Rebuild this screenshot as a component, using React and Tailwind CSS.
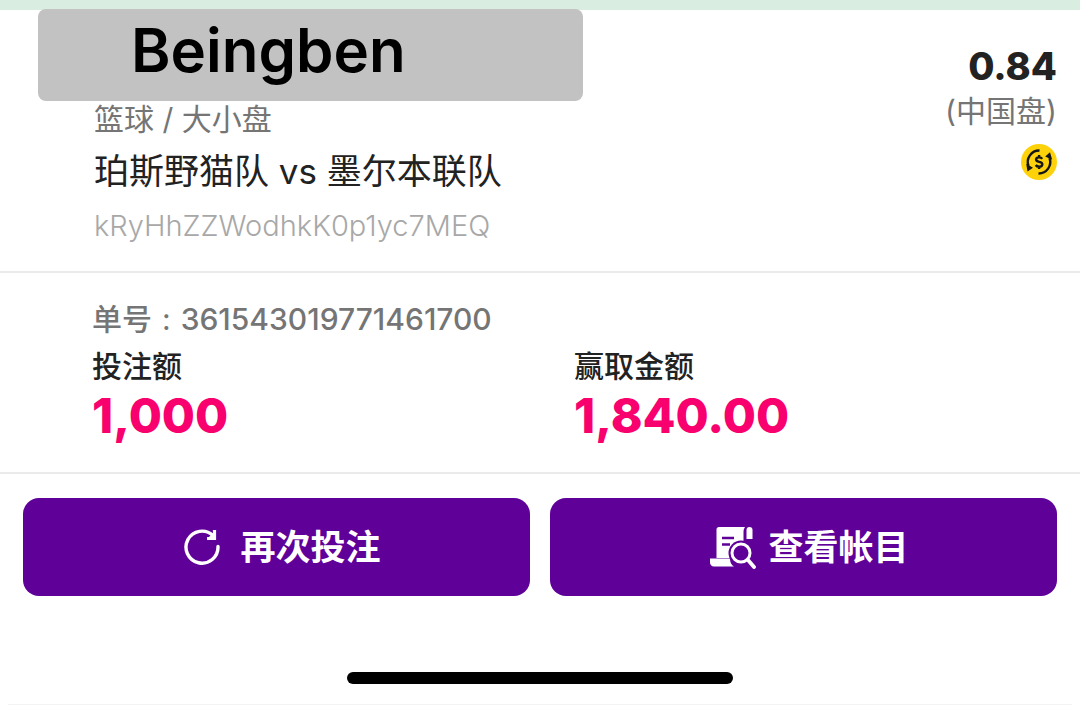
// ── Data ──────────────────────────────────────────────────────────────────────
const BET = {
  player: 'Beingben',
  market: '篮球 / 大小盘',
  match: '珀斯野猫队 vs 墨尔本联队',
  code: 'kRyHhZZWodhkK0p1yc7MEQ',
  odds: '0.84',
  oddsType: '(中国盘)',
  orderNo: '361543019771461700',
};

const AMOUNTS = [
  { label: '投注额', value: '1,000' },
  { label: '赢取金额', value: '1,840.00' },
];

// ── Icons ─────────────────────────────────────────────────────────────────────
function CashOutIcon() {
  return (
    <svg viewBox="0 0 36 36" className="size-9" role="img" aria-label="cash out">
      <circle cx="18" cy="18" r="18" fill="#fdd20a" />
      <g fill="none" stroke="#161616" strokeWidth="2.4">
        <path d="M18.5 6.5A11.5 11.5 0 0 0 7.5 22" />
        <path d="M17.5 29.5A11.5 11.5 0 0 0 28.5 14" />
        <path d="M21.2 14.9c-.6-1-1.7-1.5-3.1-1.5-1.8 0-3 .8-3 2.2 0 3.2 6.2 1.4 6.2 4.7 0 1.5-1.3 2.4-3.2 2.4-1.5 0-2.7-.6-3.4-1.7M18.1 11v2.4M18.1 22.4v2.6" />
      </g>
      <path d="M6.5 27.5L5.2 19.8l6.8 4z" fill="#161616" />
      <path d="M29 8.2l2.2 7.5-7-3.2z" fill="#161616" />
    </svg>
  );
}

function RepeatIcon() {
  return (
    <svg viewBox="0 0 36 36" className="size-9" fill="none" aria-hidden="true">
      <path
        d="M34 17.5A16 16 0 1 1 29 6.5"
        stroke="#fff"
        strokeWidth="3.4"
        strokeLinecap="round"
      />
      <path d="M30.5 1v8.5H23" stroke="#fff" strokeWidth="3.2" />
      <path d="M31 2v8h-8z" fill="#fff" />
    </svg>
  );
}

function StatementIcon() {
  return (
    <svg viewBox="0 0 46 44" className="h-11 w-[46px]" fill="none" aria-hidden="true">
      <path d="M9 2h26c-1 1.5-1.5 3-1.5 5v10h-8L20 33H6.5V4.5C6.5 3 7.5 2 9 2z" fill="#fff" />
      <path d="M36.5 14V5c0-2 1-3 3-3s3 1 3 3v9z" fill="#fff" />
      <path d="M0 33.5h20c0 4 1.5 6.5 4 8H4c-2.5 0-4-2-4-4z" fill="#fff" />
      <path d="M12 13h12M12 19.5h8" stroke="#5f0099" strokeWidth="2.4" />
      <circle cx="31" cy="28" r="12.5" fill="#5f0099" />
      <circle cx="31" cy="28" r="9" stroke="#fff" strokeWidth="3" />
      <path d="M38 35l6 7" stroke="#fff" strokeWidth="3.8" strokeLinecap="round" />
    </svg>
  );
}

// ── Sub-components ────────────────────────────────────────────────────────────
function ActionButton({ icon, gap, children }) {
  return (
    <button
      type="button"
      className={`flex h-[98px] flex-1 items-center justify-center rounded-2xl bg-[#5f0099] pl-3 text-[35px] leading-[48px] font-semibold text-white ${gap}`}
    >
      {icon}
      <span>{children}</span>
    </button>
  );
}

// ── Main page ─────────────────────────────────────────────────────────────────
export default function App() {
  return (
    <div className="bg-white font-[Inter,'Noto_Sans_CJK_SC',sans-serif] text-[#222]">
      <div className="h-2.5 bg-[#d9eee0]" />

      {/* Bet summary */}
      <section className="flex justify-between border-b-2 border-[#ebebeb] pr-[23px] pb-6">
        <div>
          <h1 className="-mt-px ml-[38px] h-[92px] w-[545px] rounded-lg bg-[#c2c2c2] pl-[93px] text-[60px] leading-[82px] font-semibold text-black">
            {BET.player}
          </h1>
          <div className="pl-[94px]">
            <p className="text-[30px] leading-9 text-[#757575]">{BET.market}</p>
            <p className="mt-2 text-[35px] leading-[52px]">{BET.match}</p>
            <p className="mt-2 text-[29px] leading-[42px] font-light text-[#a8a8a8]">{BET.code}</p>
          </div>
        </div>
        <div className="flex flex-col items-end pt-8">
          <p className="text-[38px] leading-[48px] font-extrabold">{BET.odds}</p>
          <p className="mb-3 text-[30px] leading-[42px] text-[#757575]">{BET.oddsType}</p>
          <CashOutIcon />
        </div>
      </section>

      {/* Order and amounts */}
      <section className="border-b-2 border-[#ebebeb] pt-6 pb-8 pl-[92px]">
        <p className="flex gap-2.5 text-[30px] leading-[44px] font-medium text-[#757575]">
          <span>单号</span>
          <span className="font-normal">:</span>
          <span>{BET.orderNo}</span>
        </p>
        <dl className="flex">
          {AMOUNTS.map(({ label, value }) => (
            <div key={label} className="w-[482px]">
              <dt className="text-[30px] leading-[50px] font-medium">{label}</dt>
              <dd className="text-[48px] leading-[49px] font-extrabold text-[#f9006f]">{value}</dd>
            </div>
          ))}
        </dl>
      </section>

      {/* Actions */}
      <div className="flex gap-5 px-[23px] pt-6">
        <ActionButton icon={<RepeatIcon />} gap="gap-5">再次投注</ActionButton>
        <ActionButton icon={<StatementIcon />} gap="gap-3">查看帐目</ActionButton>
      </div>

      {/* Home indicator */}
      <div className="mx-auto mt-[76px] h-3 w-[386px] rounded-full bg-black" />
      <div className="mx-2 mt-5 h-px bg-[#f3f3f3]" />
    </div>
  );
}
